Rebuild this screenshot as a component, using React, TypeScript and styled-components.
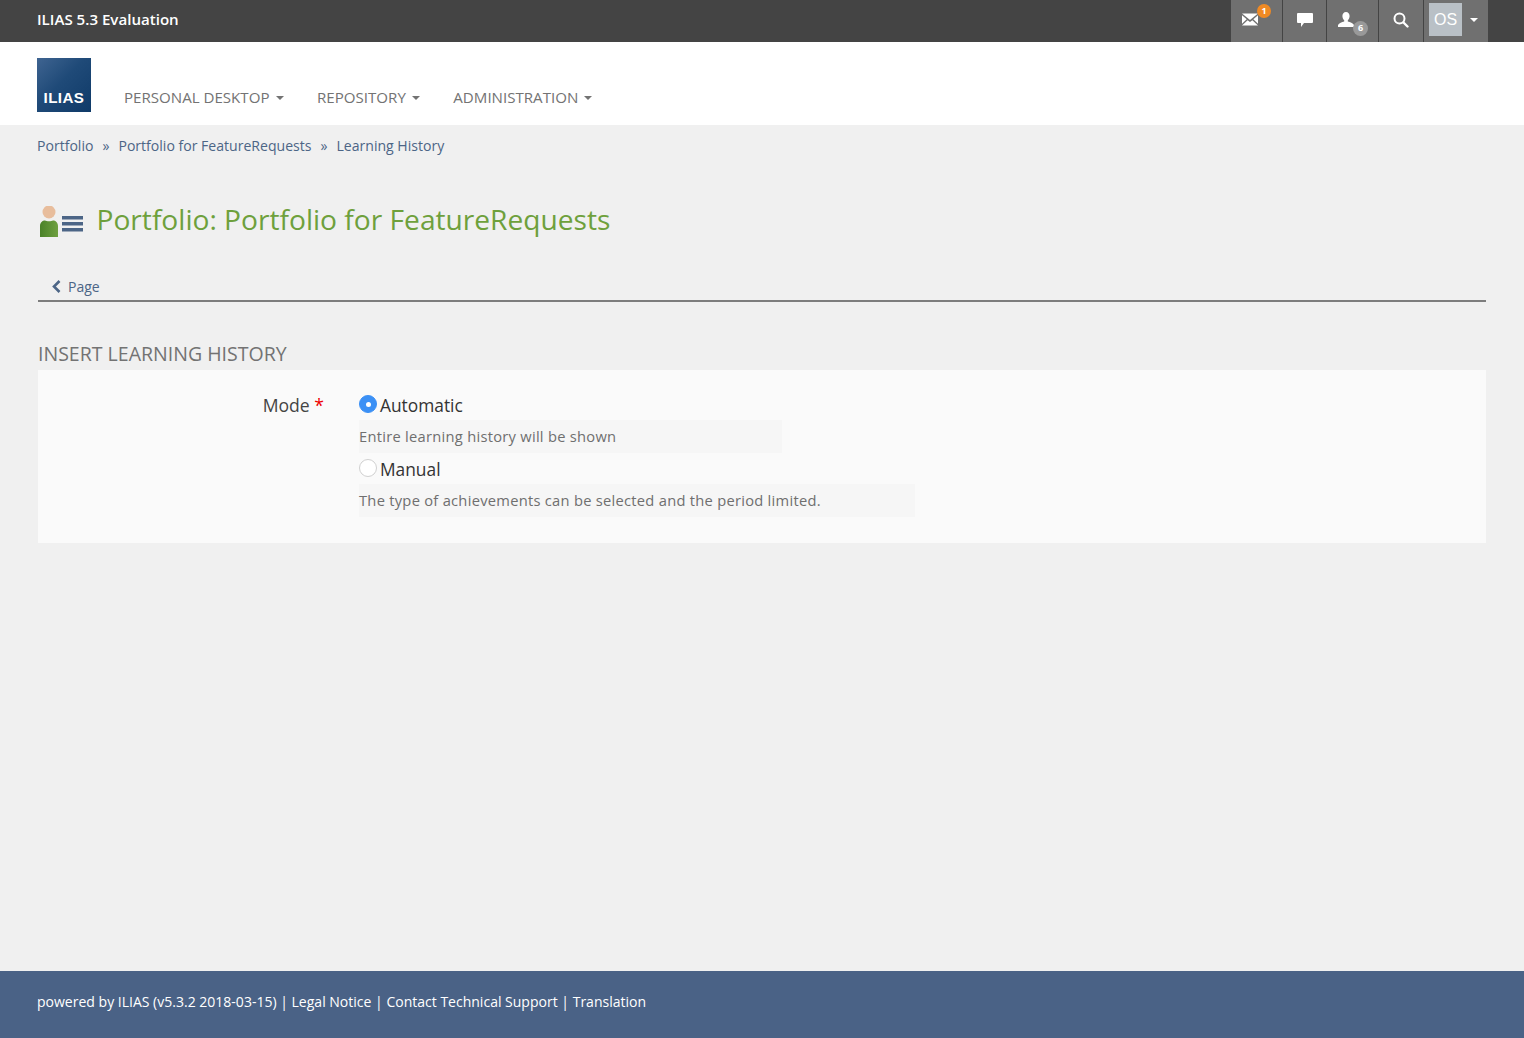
import { FC } from 'react';
import styled, { createGlobalStyle } from 'styled-components';

const GlobalStyle = createGlobalStyle`
  html, body { margin: 0; padding: 0; }
  body {
    background: #f0f0f0;
    font-family: "Open Sans", "Liberation Sans", sans-serif;
    color: #333;
  }
  * { box-sizing: border-box; }
`;

const Page = styled.div`
  display: flex;
  flex-direction: column;
  min-height: 1038px;
`;

const TopBar = styled.div`
  height: 42px;
  background: #444;
  display: flex;
  justify-content: space-between;
  padding: 0 36px 0 37px;
`;

const Brand = styled.div`
  color: #fff;
  font-size: 15.1px;
  font-weight: 600;
  line-height: 39px;
`;

const TopActions = styled.div`
  display: flex;
  gap: 1px;
`;

const TopButton = styled.div<{ $w: number; $shift?: number }>`
  position: relative;
  width: ${(p) => p.$w}px;
  background: #707070;
  display: flex;
  align-items: center;
  justify-content: center;
  padding-bottom: 3px;
  padding-right: ${(p) => p.$shift ?? 0}px;
`;

const Badge = styled.span<{ $orange?: boolean }>`
  position: absolute;
  top: ${(p) => (p.$orange ? 4 : 21)}px;
  right: ${(p) => (p.$orange ? 11 : 10)}px;
  width: ${(p) => (p.$orange ? 14 : 15)}px;
  height: ${(p) => (p.$orange ? 14 : 15)}px;
  border-radius: 50%;
  background: ${(p) => (p.$orange ? '#f08a24' : '#999')};
  color: #fff;
  font-size: 9px;
  font-weight: 700;
  line-height: 14px;
  text-align: center;
`;

const Avatar = styled.div`
  width: 33px;
  height: 33px;
  margin-left: -21px;
  background: #b9c0c6;
  color: #fff;
  font-family: "Liberation Sans", sans-serif;
  font-size: 16px;
  line-height: 33px;
  text-align: center;
`;

const UserCaret = styled.span`
  position: absolute;
  right: 10px;
  top: 18px;
  border-top: 4px solid #fff;
  border-left: 4px solid transparent;
  border-right: 4px solid transparent;
`;

const NavBar = styled.div`
  height: 83px;
  background: #fff;
  display: flex;
  align-items: flex-start;
  padding: 16px 37px 0;
`;

const Logo = styled.div`
  width: 54px;
  height: 54px;
  background: linear-gradient(135deg, #3f6491 0%, #1f4a78 45%, #0f3a68 100%);
  color: #fff;
  font-family: "Liberation Sans", sans-serif;
  font-weight: 700;
  font-size: 15.2px;
  letter-spacing: 0.4px;
  text-align: center;
  padding-top: 31px;
  line-height: 18px;
`;

const NavMenu = styled.div`
  display: flex;
  gap: 32.5px;
  margin-left: 33px;
  padding-top: 29px;
`;

const NavItem = styled.div`
  display: flex;
  align-items: center;
  gap: 6px;
  color: #737373;
  font-size: 15.1px;
  line-height: 20px;
`;

const NavCaret = styled.span`
  border-top: 4px solid #737373;
  border-left: 4px solid transparent;
  border-right: 4px solid transparent;
  margin: 2px 1px 0 0;
`;

const Main = styled.div`
  flex: 1;
  padding: 0 38px;
`;

const Breadcrumb = styled.div`
  display: flex;
  gap: 9px;
  margin-left: -1px;
  padding-top: 11px;
  font-size: 14.07px;
  line-height: 20px;
  color: #4c6586;
`;

const TitleRow = styled.div`
  display: flex;
  align-items: center;
  margin-top: 42px;
  height: 48px;
`;

const Title = styled.h1`
  margin: 0 0 0 11.5px;
  color: #6ea03c;
  font-size: 28.15px;
  font-weight: 400;
  line-height: 36px;
  position: relative;
  top: -3px;
`;

const Tabs = styled.div`
  display: flex;
  align-items: center;
  gap: 7px;
  margin-top: 25px;
  height: 31px;
  padding: 2px 0 0 14px;
  border-bottom: 2px solid #7d7d7d;
  color: #4c6586;
  font-size: 14px;
`;

const SectionTitle = styled.h2`
  margin: 39px 0 0;
  color: #737373;
  font-size: 19.54px;
  font-weight: 400;
  line-height: 26px;
  height: 29px;
`;

const Panel = styled.div`
  display: flex;
  height: 173px;
  background: #fafafa;
  padding-top: 23px;
`;

const FieldLabel = styled.div`
  width: 286px;
  text-align: right;
  font-size: 17.6px;
  line-height: 24px;
  color: #444;
`;

const Required = styled.span`
  color: #e00;
`;

const Options = styled.div`
  margin-left: 35px;
`;

const OptionRow = styled.div`
  display: flex;
  align-items: center;
  gap: 3px;
  height: 24px;
  font-size: 17.35px;
  color: #333;
`;

const Radio = styled.span<{ $checked?: boolean }>`
  width: 18px;
  height: 18px;
  border-radius: 50%;
  position: relative;
  top: -1px;
  background: ${(p) => (p.$checked ? '#3b90f5' : '#fff')};
  border: 1px solid ${(p) => (p.$checked ? '#3b90f5' : '#d0d0d0')};
  display: flex;
  align-items: center;
  justify-content: center;
  &::after {
    content: '';
    display: ${(p) => (p.$checked ? 'block' : 'none')};
    width: 5px;
    height: 5px;
    border-radius: 50%;
    background: #fff;
  }
`;

const Help = styled.div<{ $w: number }>`
  width: ${(p) => p.$w}px;
  height: 33px;
  margin: 3px 0 4px;
  background: #f6f6f6;
  color: #6f6f6f;
  font-size: 14.7px;
  letter-spacing: 0.27px;
  line-height: 33px;
`;

const Footer = styled.div`
  height: 67px;
  background: #4a6286;
  color: #fff;
  font-size: 14.02px;
  line-height: 62px;
  padding: 0 37px;
`;

const MailIcon: FC = () => (
  <svg width="16" height="13" viewBox="0 0 17 13">
    <path fill="#fff" d="M0 0h17L8.5 7zM0 2l5 4.2L0 11zM17 2l-5 4.2 5 4.8zM6 7.2l2.5 2 2.5-2 6 5.8H0z" />
  </svg>
);

const ChatIcon: FC = () => (
  <svg width="16" height="14" viewBox="0 0 16 14">
    <path fill="#fff" d="M1 0h14a1 1 0 0 1 1 1v8a1 1 0 0 1-1 1H7l-3 4v-4H1a1 1 0 0 1-1-1V1a1 1 0 0 1 1-1z" />
  </svg>
);

const UserIcon: FC = () => (
  <svg width="16" height="15" viewBox="0 0 16 15">
    <path fill="#fff" d="M8 0c2.2 0 3.6 1.7 3.6 4 0 1.8-.8 3.3-1.8 4.2v1.2c2.2.7 5.2 1.6 6.2 3.6v2H0v-2c1-2 4-2.9 6.2-3.6V8.2C5.2 7.3 4.4 5.8 4.4 4 4.4 1.7 5.8 0 8 0z" />
  </svg>
);

const SearchIcon: FC = () => (
  <svg width="16" height="16" viewBox="0 0 16 16">
    <circle cx="6.5" cy="6.5" r="5" fill="none" stroke="#fff" strokeWidth="2" />
    <path stroke="#fff" strokeWidth="2.4" strokeLinecap="round" d="M10.5 10.5L14.5 14.5" />
  </svg>
);

const PortfolioIcon: FC = () => (
  <svg width="47" height="32" viewBox="0 0 47 32">
    <defs>
      <linearGradient id="body" x1="0" x2="1" y1="0" y2="0">
        <stop offset="0" stopColor="#4a8229" />
        <stop offset="1" stopColor="#6fa040" />
      </linearGradient>
    </defs>
    <circle cx="11" cy="6" r="6.5" fill="#e8bd9c" />
    <path fill="url(#body)" d="M2 31V20c0-3.5 2.5-5.5 5-5.500 1.500 1 6.500 1 8 0 2.500 0 5 2 5 5.500v11z" />
    <path fill="#4c6586" d="M24 10h21v3.5H24zM24 16h21v3.5H24zM24 22h21v3.5H24z" />
  </svg>
);

const ChevronLeft: FC = () => (
  <svg width="9" height="13" viewBox="0 0 9 13">
    <path fill="none" stroke="#4c6586" strokeWidth="2.6" d="M7.5 1L2 6.5 7.5 12" />
  </svg>
);

const App: FC = () => {
  return (
    <Page>
      <GlobalStyle />
      <TopBar>
        <Brand>ILIAS 5.3 Evaluation</Brand>
        <TopActions>
          <TopButton $w={51} $shift={14}>
            <MailIcon />
            <Badge $orange>1</Badge>
          </TopButton>
          <TopButton $w={43}>
            <ChatIcon />
          </TopButton>
          <TopButton $w={51} $shift={14}>
            <UserIcon />
            <Badge>6</Badge>
          </TopButton>
          <TopButton $w={44}>
            <SearchIcon />
          </TopButton>
          <TopButton $w={64}>
            <Avatar>OS</Avatar>
            <UserCaret />
          </TopButton>
        </TopActions>
      </TopBar>
      <NavBar>
        <Logo>ILIAS</Logo>
        <NavMenu>
          <NavItem>PERSONAL DESKTOP <NavCaret /></NavItem>
          <NavItem>REPOSITORY <NavCaret /></NavItem>
          <NavItem>ADMINISTRATION <NavCaret /></NavItem>
        </NavMenu>
      </NavBar>
      <Main>
        <Breadcrumb>
          <span>Portfolio</span>
          <span>»</span>
          <span>Portfolio for FeatureRequests</span>
          <span>»</span>
          <span>Learning History</span>
        </Breadcrumb>
        <TitleRow>
          <PortfolioIcon />
          <Title>Portfolio: Portfolio for FeatureRequests</Title>
        </TitleRow>
        <Tabs>
          <ChevronLeft />
          <span>Page</span>
        </Tabs>
        <SectionTitle>INSERT LEARNING HISTORY</SectionTitle>
        <Panel>
          <FieldLabel>Mode <Required>*</Required></FieldLabel>
          <Options>
            <OptionRow>
              <Radio $checked />
              Automatic
            </OptionRow>
            <Help $w={423}>Entire learning history will be shown</Help>
            <OptionRow>
              <Radio />
              Manual
            </OptionRow>
            <Help $w={556}>The type of achievements can be selected and the period limited.</Help>
          </Options>
        </Panel>
      </Main>
      <Footer>
        powered by ILIAS (v5.3.2 2018-03-15) | Legal Notice | Contact Technical Support | Translation
      </Footer>
    </Page>
  );
};

export default App;
